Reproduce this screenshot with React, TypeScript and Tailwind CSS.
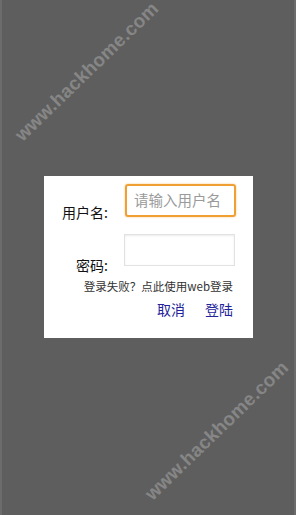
import React from 'react';

const cjk = { fontFamily: '"Noto Sans CJK SC", "Noto Sans", sans-serif' };

function Watermark({ className }: { className: string }) {
    return (
        <div
            className={"absolute -translate-x-1/2 -translate-y-1/2 rotate-[-44deg] whitespace-nowrap text-[19px] font-bold tracking-[0.2px] text-white/25 pointer-events-none " + className}
            style={{ fontFamily: '"Liberation Sans", Arial, sans-serif' }}
        >
            www.hackhome.com
        </div>
    );
}

export default function App() {
    return (
        <div className="relative w-[296px] h-[515px] overflow-hidden bg-[#5e5e5e] border-x-2 border-[#6c6c6c]" style={cjk}>
            <Watermark className="left-[85px] top-[72px]" />
            <Watermark className="left-[215px] top-[431px]" />

            <div className="relative ml-[42px] mt-[176px] w-[209px] h-[162px] bg-white pt-[8px] pr-[17px]">
                {/* username */}
                <div className="flex items-end">
                    <label className="w-[64px] text-right text-[14px] leading-[16px] text-[#111] mb-[-3px]">用户名:</label>
                    <div className="ml-[17px] w-[111px] h-[33px] rounded-[3px] border-2 border-[#f0a032] shadow-[0_0_2px_#f5c27a] flex items-center pl-[7px]">
                        <span className="text-[14.5px] leading-none text-[#9a9a9a]">请输入用户名</span>
                    </div>
                </div>

                {/* password */}
                <div className="flex items-end mt-[17px]">
                    <label className="w-[64px] text-right text-[14px] leading-[16px] text-[#111] mb-[-7px]">密码:</label>
                    <div className="ml-[16px] w-[111px] h-[32px] border border-[#e2e2e2] shadow-[inset_0_1px_2px_#ececec] bg-white"></div>
                </div>

                {/* fallback link */}
                <div className="mt-[13px] text-right pr-[3px] text-[11.5px] leading-[14px] text-[#333]">
                    登录失败？点此使用web登录
                </div>

                {/* buttons */}
                <div className="mt-[8px] flex justify-end gap-[20px] pr-[3px] text-[14px] leading-[16px] text-[#22229a]">
                    <span>取消</span>
                    <span>登陆</span>
                </div>
            </div>
        </div>
    );
}
